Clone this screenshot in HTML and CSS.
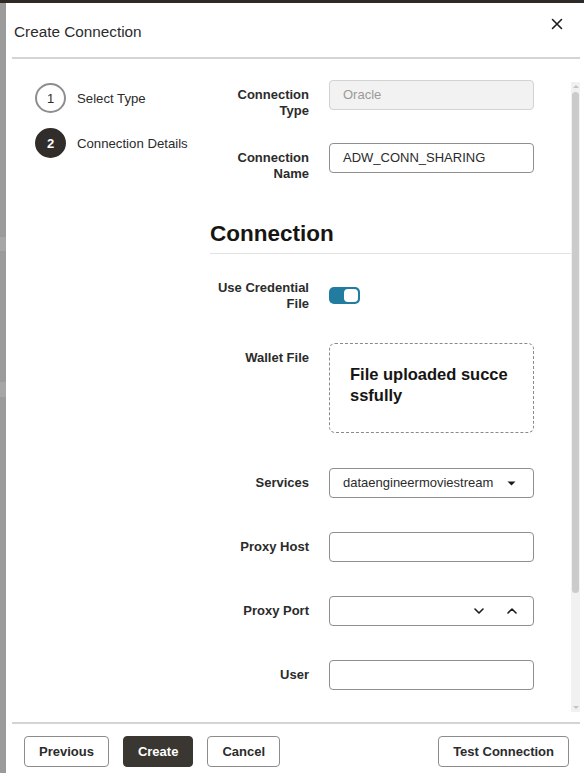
FILE: index.html
```html
<!DOCTYPE html>
<html lang="en">
<head>
<meta charset="utf-8">
<title>Create Connection</title>
<link rel="stylesheet" href="styles.css">
</head>
<body>
<div class="page">
  <div class="topbar"></div>
  <div class="main">
    <div class="strip"></div>
    <div class="dialog">
      <header class="dlg-head">
        <h1 class="dlg-title">Create Connection</h1>
        <button class="close" aria-label="Close">
          <svg width="12" height="12" viewBox="0 0 12 12"><path d="M1.5 1.5 L10.5 10.5 M10.5 1.5 L1.5 10.5" stroke="#1d1c1a" stroke-width="1.6" stroke-linecap="round" fill="none"/></svg>
        </button>
      </header>
      <div class="dlg-body">
        <nav class="steps">
          <div class="step">
            <span class="step-num">1</span>
            <span class="step-label">Select Type</span>
          </div>
          <div class="step current">
            <span class="step-num">2</span>
            <span class="step-label">Connection Details</span>
          </div>
        </nav>
        <div class="content">
          <div class="row row-type">
            <div class="label">Connection<br>Type</div>
            <div class="field disabled">Oracle</div>
          </div>
          <div class="row row-name">
            <div class="label">Connection<br>Name</div>
            <div class="field">ADW_CONN_SHARING</div>
          </div>
          <h2 class="section">Connection</h2>
          <div class="row row-cred">
            <div class="label">Use Credential<br>File</div>
            <div class="toggle"><span class="knob"></span></div>
          </div>
          <div class="row row-wallet">
            <div class="label">Wallet File</div>
            <div class="dropzone">File uploaded successfully</div>
          </div>
          <div class="row">
            <div class="label">Services</div>
            <div class="field select">
              <span class="select-text">dataengineermoviestream</span>
              <svg class="caret" width="9" height="5" viewBox="0 0 9 5"><path d="M0.5 0.5 L8.5 0.5 L4.5 4.5 Z" fill="#1d1c1a"/></svg>
            </div>
          </div>
          <div class="row">
            <div class="label">Proxy Host</div>
            <div class="field"></div>
          </div>
          <div class="row">
            <div class="label">Proxy Port</div>
            <div class="field number">
              <svg class="chev" width="10" height="6" viewBox="0 0 10 6"><path d="M1 1 L5 5 L9 1" stroke="#1d1c1a" stroke-width="1.6" fill="none" stroke-linecap="round" stroke-linejoin="round"/></svg>
              <svg class="chev" width="10" height="6" viewBox="0 0 10 6"><path d="M1 5 L5 1 L9 5" stroke="#1d1c1a" stroke-width="1.6" fill="none" stroke-linecap="round" stroke-linejoin="round"/></svg>
            </div>
          </div>
          <div class="row">
            <div class="label">User</div>
            <div class="field"></div>
          </div>
        </div>
        <div class="scrollbar">
          <span class="sb-arrow up"></span>
          <span class="sb-thumb"></span>
          <span class="sb-arrow down"></span>
        </div>
      </div>
      <footer class="dlg-foot">
        <button class="btn">Previous</button>
        <button class="btn primary">Create</button>
        <button class="btn">Cancel</button>
        <button class="btn push">Test Connection</button>
      </footer>
    </div>
  </div>
</div>
</body>
</html>
```
FILE: styles.css
```css
* { box-sizing: border-box; }
html, body { margin: 0; padding: 0; }
body {
  width: 584px;
  height: 773px;
  overflow: hidden;
  font-family: "Liberation Sans", Arial, sans-serif;
  color: #161513;
  background: #9a9a9a;
}
.page { display: flex; flex-direction: column; height: 773px; }
.topbar { height: 3px; background: #2d2a27; flex: none; }
.main { flex: 1; display: flex; min-height: 0; }
.strip {
  width: 6px;
  flex: none;
  background:
    linear-gradient(to bottom,
      #9b9b9b 0, #9b9b9b 234px,
      #a6a6a6 234px, #a6a6a6 248px,
      #9b9b9b 248px, #9b9b9b 379px,
      #a6a6a6 379px, #a6a6a6 394px,
      #9b9b9b 394px);
}
.dialog {
  flex: 1;
  background: #fff;
  display: flex;
  flex-direction: column;
  min-width: 0;
}

/* header */
.dlg-head {
  display: flex;
  align-items: flex-start;
  height: 56px;
  margin: 0 4px 0 6px;
  border-bottom: 2px solid #d4d4d4;
  flex: none;
}
.dlg-title {
  margin: 19px 0 0 2px;
  font-size: 15.3px;
  line-height: 20px;
  font-weight: normal;
  color: #2b2b2b;
  flex: 1;
}
.close {
  width: 20px;
  height: 20px;
  margin: 11px 13px 0 0;
  padding: 0;
  border: 0;
  background: transparent;
  display: flex;
  align-items: center;
  justify-content: center;
}

/* body */
.dlg-body {
  flex: 1;
  display: flex;
  min-height: 0;
}
.steps {
  width: 204px;
  flex: none;
  padding: 24px 0 0 29px;
  display: flex;
  flex-direction: column;
  gap: 15px;
}
.step { display: flex; align-items: center; gap: 11px; }
.step-num {
  width: 31px;
  height: 30px;
  border-radius: 50%;
  border: 2px solid #8e8e8e;
  display: flex;
  align-items: center;
  justify-content: center;
  font-size: 13px;
  color: #2b2b2b;
}
.step.current .step-num {
  background: #312d2a;
  border-color: #312d2a;
  color: #fff;
  font-weight: bold;
}
.step-label { font-size: 13.2px; color: #2b2b2b; }

.content {
  width: 361px;
  flex: none;
  overflow: hidden;
  padding-top: 21px;
}
.row {
  display: grid;
  grid-template-columns: 99px 205px;
  column-gap: 20px;
  align-items: start;
  margin-bottom: 34px;
}
.row-type { margin-bottom: 24px; }
.row-name { margin-bottom: 39px; }
.row-cred { margin-bottom: 31px; }
.row-wallet { margin-bottom: 35px; }
.label {
  text-align: right;
  font-size: 13px;
  line-height: 16px;
  font-weight: bold;
  color: #2b2b2b;
  padding-top: 7px;
}
.field {
  height: 30px;
  border: 1px solid #8f8f8f;
  border-radius: 4px;
  padding: 0 13px;
  font-size: 13px;
  line-height: 28px;
  color: #2b2b2b;
  white-space: nowrap;
  overflow: hidden;
}
.field.disabled {
  background: #f2f2f2;
  border-color: #d2d2d2;
  color: #9a9a9a;
}
.section {
  margin: 0 0 19px 0;
  font-size: 22.5px;
  line-height: 26px;
  font-weight: bold;
  padding-bottom: 6px;
  border-bottom: 1px solid #e2e2e2;
}
.toggle {
  margin-top: 14px;
  width: 31px;
  height: 17px;
  border-radius: 5px;
  background: #227ca0;
  padding: 2px;
  display: flex;
}
.knob {
  margin-left: auto;
  width: 14px;
  height: 13px;
  border-radius: 4px;
  background: #fff;
}
.dropzone {
  height: 90px;
  border: 1px dashed #8a8a8a;
  border-radius: 6px;
  padding: 20px 20px;
  font-size: 16.5px;
  line-height: 21px;
  font-weight: bold;
  word-break: break-all;
}
.select { display: flex; align-items: center; padding-right: 17px; }
.select-text { width: 151px; flex: none; overflow: hidden; }
.caret { flex: none; margin-left: auto; }
.number {
  display: flex;
  align-items: center;
  justify-content: flex-end;
  gap: 23px;
  padding-right: 16px;
}

/* scrollbar */
.scrollbar {
  width: 9px;
  flex: none;
  margin: 23px 0 10px 0;
  background: #f1f1f1;
  display: flex;
  flex-direction: column;
  align-items: center;
}
.sb-arrow {
  width: 0;
  height: 0;
  border-left: 3px solid transparent;
  border-right: 3px solid transparent;
}
.sb-arrow.up { border-bottom: 3px solid #c3c3c3; margin: 3px 0 4px; }
.sb-arrow.down { border-top: 3px solid #c3c3c3; margin: auto 0 3px; }
.sb-thumb {
  width: 7px;
  height: 501px;
  border-radius: 4px;
  background: #cbcbcb;
}

/* footer */
.dlg-foot {
  flex: none;
  margin: 0 4px 0 6px;
  border-top: 2px solid #d4d4d4;
  padding: 12px 11px 6px 12px;
  display: flex;
  gap: 14px;
}
.btn {
  height: 31px;
  padding: 0 14px;
  border: 1px solid #8c8c8c;
  border-radius: 4px;
  background: #fff;
  font-family: "Liberation Sans", Arial, sans-serif;
  font-size: 13px;
  font-weight: bold;
  color: #2b2b2b;
}
.btn.primary {
  background: #3a3631;
  border-color: #3a3631;
  color: #fff;
}
.btn.push { margin-left: auto; }
```
